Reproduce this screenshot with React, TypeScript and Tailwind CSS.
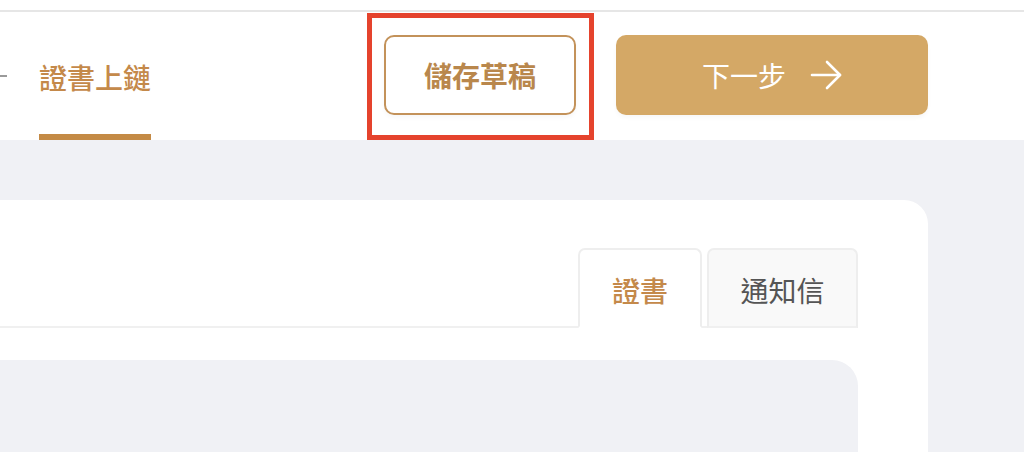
import React from "react";

function ArrowIcon() {
  return (
    <svg width="32" height="30" viewBox="0 0 32 30" fill="none" stroke="currentColor" strokeWidth="2.6" strokeLinecap="round" strokeLinejoin="round">
      <path d="M2 15H30" />
      <path d="M17 2L30 15L17 28" />
    </svg>
  );
}

export default function App() {
  return (
    <div
      className="w-[1024px] h-[452px] overflow-hidden bg-[#f0f1f5] flex flex-col"
      style={{ fontFamily: '"Noto Sans CJK TC", "Noto Sans", sans-serif' }}
    >
      {/* header */}
      <header className="bg-white pt-[10px] shrink-0">
        <div className="h-[130px] border-t-2 border-[#e6e6e6] flex">
          <div className="w-[7px] h-[2px] bg-[#9a9a9a] mt-[63px]" />
          <div className="ml-[32px] w-[112px] flex flex-col items-center">
            <span className="mt-[45px] text-[28px] leading-[40px] font-medium text-[#c4894a]">證書上鏈</span>
            <div className="mt-auto h-[6px] w-full bg-[#c48a45]" />
          </div>
          <div className="ml-[216px] mt-[1px] w-[227px] h-[127px] border-[5px] border-[#e5432d] pl-[12px] pt-[17px]">
            <button className="w-[192px] h-[80px] rounded-[10px] border-2 border-[#c3925a] bg-white text-[28px] font-semibold text-[#b9874c] shadow-[0_3px_4px_rgba(0,0,0,0.03)]">
              儲存草稿
            </button>
          </div>
          <button className="ml-[22px] mt-[23px] w-[312px] h-[80px] rounded-[10px] bg-[#d4a866] text-white flex items-center justify-center gap-[24px] shadow-[0_3px_4px_rgba(0,0,0,0.03)]">
            <span className="text-[28px]">下一步</span>
            <ArrowIcon />
          </button>
        </div>
      </header>

      {/* content */}
      <main className="flex-1 pt-[60px]">
        <div className="w-[928px] h-full bg-white rounded-tr-[24px] pt-[48px] pr-[70px]">
          <div className="flex justify-end items-end gap-[5px] border-b-2 border-[#f0f0f0]">
            <div className="-mb-[2px] w-[124px] h-[80px] rounded-t-[7px] border-2 border-[#eeeeee] border-b-white bg-white flex items-center justify-center">
              <span className="text-[28px] font-medium text-[#c4894a] mt-[4px]">證書</span>
            </div>
            <div className="-mb-[2px] w-[151px] h-[80px] rounded-t-[7px] border-2 border-[#eeeeee] border-b-[#f0f0f0] bg-[#f9f9f9] flex items-center justify-center">
              <span className="text-[28px] text-[#555555] mt-[4px]">通知信</span>
            </div>
          </div>
          <div className="mt-[32px] h-[200px] bg-[#f0f1f5] rounded-tr-[26px]" />
        </div>
      </main>
    </div>
  );
}
